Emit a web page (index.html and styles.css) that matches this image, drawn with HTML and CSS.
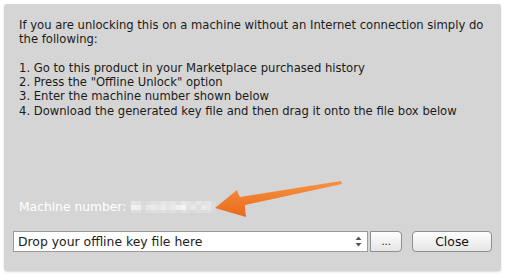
FILE: index.html
```html
<!DOCTYPE html>
<html lang="en">
<head>
    <meta charset="UTF-8">
    <title>Offline Unlock</title>
    <link rel="stylesheet" href="styles.css">
</head>
<body>

<div class="panel">
    <!-- instructions -->
    <div class="intro">
        <p>If you are unlocking this on a machine without an Internet connection simply do the following:</p>
        <p>1. Go to this product in your Marketplace purchased history<br>
        2. Press the "Offline Unlock" option<br>
        3. Enter the machine number shown below<br>
        4. Download the generated key file and then drag it onto the file box below</p>
    </div>

    <div class="machine">
        Machine number:
        <span class="mosaic">
            <i style="background:#e4e4e4"></i><i style="background:#e2e2e2"></i><i style="background:#d9d9d9"></i><i style="background:#dcdcdc"></i><i style="background:#e3e3e3"></i><i style="background:#e0e0e0"></i><i style="background:#e6e6e6"></i><i style="background:#e2e2e2"></i><i style="background:#e5e5e5"></i><i style="background:#dedede"></i><i style="background:#e7e7e7"></i><i style="background:#e3e3e3"></i><i style="background:#dddddd"></i><i style="background:#e6e6e6"></i><i style="background:#e1e1e1"></i><i style="background:#e4e4e4"></i><i style="background:#dadada"></i>
            <i style="background:#f1f1f1"></i><i style="background:#eeeeee"></i><i style="background:#dcdcdc"></i><i style="background:#e8e8e8"></i><i style="background:#eaeaea"></i><i style="background:#e6e6e6"></i><i style="background:#ececec"></i><i style="background:#e5e5e5"></i><i style="background:#eaeaea"></i><i style="background:#f0f0f0"></i><i style="background:#f4f4f4"></i><i style="background:#e2e2e2"></i><i style="background:#e8e8e8"></i><i style="background:#dedede"></i><i style="background:#ebebeb"></i><i style="background:#e7e7e7"></i><i style="background:#dcdcdc"></i>
            <i style="background:#dddddd"></i><i style="background:#dedede"></i><i style="background:#d8d8d8"></i><i style="background:#dbdbdb"></i><i style="background:#dfdfdf"></i><i style="background:#dcdcdc"></i><i style="background:#e0e0e0"></i><i style="background:#dddddd"></i><i style="background:#dfdfdf"></i><i style="background:#dadada"></i><i style="background:#e1e1e1"></i><i style="background:#dddddd"></i><i style="background:#d9d9d9"></i><i style="background:#dfdfdf"></i><i style="background:#dcdcdc"></i><i style="background:#dedede"></i><i style="background:#d8d8d8"></i>
        </span>
    </div>

    <!-- file row -->
    <div class="file-row">
        <div class="file-box">
            <span>Drop your offline key file here</span>
            <svg class="stepper" width="7" height="11" viewBox="0 0 7 11">
                <path d="M3.5 0.5 L6.5 4 L0.5 4 Z" fill="#555"/>
                <path d="M3.5 10.5 L6.5 7 L0.5 7 Z" fill="#555"/>
            </svg>
        </div>
        <button class="browse">...</button>
        <button class="close">Close</button>
    </div>

    <!-- orange pointer -->
    <svg class="arrow" width="132" height="42" viewBox="0 0 132 42">
        <defs>
            <linearGradient id="org" x1="0" y1="0" x2="0" y2="1">
                <stop offset="0" stop-color="#f7923f"/>
                <stop offset="1" stop-color="#e8691c"/>
            </linearGradient>
        </defs>
        <path d="M1 30 L23 12 Q24 16 26 19 L127 3 L128 6 L31 27 Q31 33 32 39 Z" fill="url(#org)"/>
    </svg>
</div>

</body>
</html>
```

FILE: styles.css
```css
body {
    margin: 0;
    background: #fff;
    font-family: 'DejaVu Sans', 'Liberation Sans', sans-serif;
    font-size: 11.6px;
    color: #1b1b1b;
}

.panel {
    position: relative;
    margin: 4px;
    width: 497px;
    height: 267px;
    box-sizing: border-box;
    padding: 0 9px 19px 9px;
    background: #d5d5d5;
    border-radius: 3px;
    box-shadow: 0 1px 2px rgba(0, 0, 0, 0.15);
    display: flex;
    flex-direction: column;
}

.intro {
    padding: 14px 6px 0 6px;
    line-height: 14.3px;
}

.intro p {
    margin: 0 0 14.3px 0;
}

.machine {
    margin-top: auto;
    padding-left: 6px;
    color: #fff;
    font-size: 12.3px;
    display: flex;
    align-items: center;
    gap: 5px;
    height: 16px;
}

/* blurred machine id */
.mosaic {
    display: grid;
    grid-template-columns: repeat(17, 5px);
    grid-template-rows: 4px 5px 3px;
}

.mosaic i {
    display: block;
}

.file-row {
    margin-top: 16px;
    display: flex;
    align-items: center;
    height: 21px;
}

.file-box {
    width: 356px;
    height: 21px;
    box-sizing: border-box;
    border: 1px solid #9a9a9a;
    background: #fff;
    display: flex;
    align-items: center;
    justify-content: space-between;
    padding: 0 5px 0 4px;
    font-size: 12.4px;
    color: #222;
}

.browse, .close {
    height: 21px;
    font-family: inherit;
    font-size: 12.4px;
    color: #111;
    border: 1px solid #8f8f8f;
    background: linear-gradient(#fdfdfd, #e6e6e6);
    padding: 0;
}

.browse {
    width: 32px;
    margin-left: 2px;
    border-radius: 0 4px 4px 0;
    font-size: 10px;
    line-height: 1;
}

.close {
    width: 80px;
    margin-left: 10px;
    border-radius: 4px;
}

.arrow {
    position: absolute;
    left: 210px;
    top: 174px;
}
```
